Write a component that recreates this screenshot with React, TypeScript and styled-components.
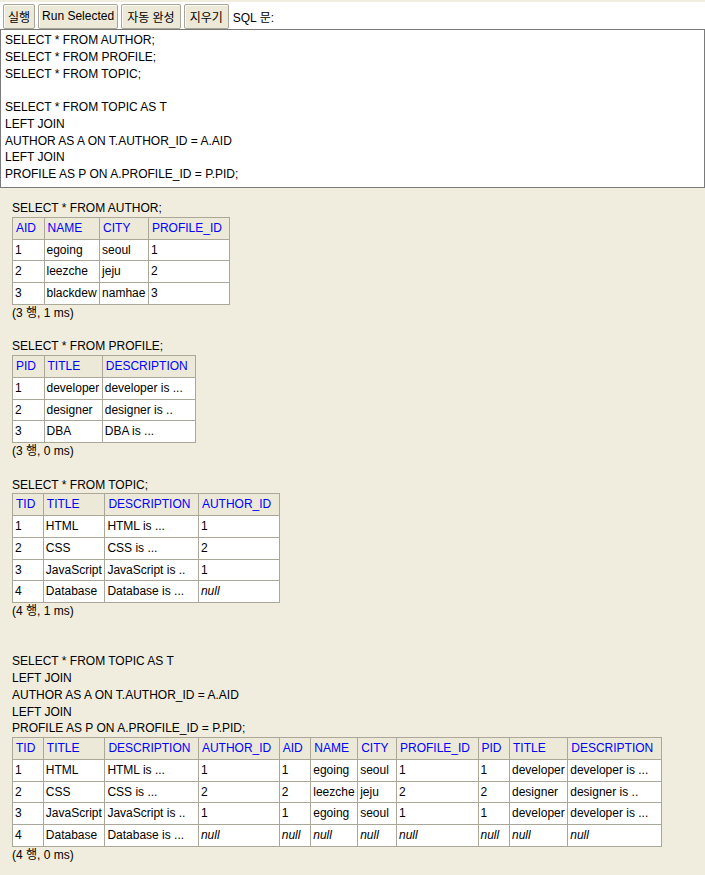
import React from "react";
import styled, { createGlobalStyle } from "styled-components";

const GlobalStyle = createGlobalStyle`
  html, body {
    margin: 0;
    padding: 0;
    background: #f0eddf;
  }
  body {
    font-family: "Liberation Sans", Arial, "Noto Sans CJK KR", sans-serif;
    font-size: 12px;
    color: #000;
  }
`;

const Toolbar = styled.div`
  display: flex;
  align-items: center;
  gap: 3px;
  height: 26px;
  padding: 1px 0 0 3px;
  border-top: 2px solid #f0eddf;
  background: #fff;
`;

const ToolButton = styled.button<{ $pad?: number }>`
  height: 25px;
  padding: 0 ${(p) => p.$pad ?? 4}px;
  margin: 0;
  font: 12px "Liberation Sans", Arial, "Noto Sans CJK KR", sans-serif;
  color: #000;
  background: #ece9d8;
  border: 1px solid #a9a699;
  border-radius: 2px;
  box-shadow: inset 1px 1px 0 #fbfaf5;
`;

const Label = styled.span`
  margin-left: 1px;
  font-size: 12px;
`;

const Editor = styled.textarea`
  display: block;
  box-sizing: border-box;
  width: 100%;
  height: 159px;
  margin: 0;
  padding: 2px 4px 0;
  border: 1px solid #7a7a7a;
  font: 12px/16.75px "Liberation Sans", Arial, "Noto Sans CJK KR", sans-serif;
  color: #000;
  background: #fff;
  resize: none;
  overflow: hidden;
`;

const Results = styled.div`
  padding: 12px 12px 20px;
  line-height: 16.75px;
`;

const Query = styled.div`
  white-space: pre;
`;

const Gap = styled.div<{ $lines: number }>`
  height: ${(p) => p.$lines * 16.75}px;
`;

const Table = styled.table`
  border-collapse: collapse;
  background: #fff;
`;

const Th = styled.th`
  border: 1px solid #aca899;
  background: #ece9d8;
  color: #0000ff;
  font-weight: normal;
  text-align: left;
  white-space: nowrap;
  padding: 2px 7.5px 2px 3px;
  line-height: 16.75px;
`;

const Td = styled.td<{ $null?: boolean }>`
  border: 1px solid #aca899;
  padding: 2px 2.5px 2px 2px;
  white-space: nowrap;
  line-height: 16.75px;
  font-style: ${(p) => (p.$null ? "italic" : "normal")};
`;

const Status = styled.div``;

type Cell = string | null;

interface Result {
  sql: string;
  cols: string[];
  rows: Cell[][];
  status: string;
  gapBefore: number;
}

const results: Result[] = [
  {
    sql: "SELECT * FROM AUTHOR;",
    cols: ["AID", "NAME", "CITY", "PROFILE_ID"],
    rows: [
      ["1", "egoing", "seoul", "1"],
      ["2", "leezche", "jeju", "2"],
      ["3", "blackdew", "namhae", "3"],
    ],
    status: "(3 행, 1 ms)",
    gapBefore: 0,
  },
  {
    sql: "SELECT * FROM PROFILE;",
    cols: ["PID", "TITLE", "DESCRIPTION"],
    rows: [
      ["1", "developer", "developer is ..."],
      ["2", "designer", "designer is .."],
      ["3", "DBA", "DBA is ..."],
    ],
    status: "(3 행, 0 ms)",
    gapBefore: 1,
  },
  {
    sql: "SELECT * FROM TOPIC;",
    cols: ["TID", "TITLE", "DESCRIPTION", "AUTHOR_ID"],
    rows: [
      ["1", "HTML", "HTML is ...", "1"],
      ["2", "CSS", "CSS is ...", "2"],
      ["3", "JavaScript", "JavaScript is ..", "1"],
      ["4", "Database", "Database is ...", null],
    ],
    status: "(4 행, 1 ms)",
    gapBefore: 1,
  },
  {
    sql: "SELECT * FROM TOPIC AS T\nLEFT JOIN\nAUTHOR AS A ON T.AUTHOR_ID = A.AID\nLEFT JOIN\nPROFILE AS P ON A.PROFILE_ID = P.PID;",
    cols: [
      "TID",
      "TITLE",
      "DESCRIPTION",
      "AUTHOR_ID",
      "AID",
      "NAME",
      "CITY",
      "PROFILE_ID",
      "PID",
      "TITLE",
      "DESCRIPTION",
    ],
    rows: [
      ["1", "HTML", "HTML is ...", "1", "1", "egoing", "seoul", "1", "1", "developer", "developer is ..."],
      ["2", "CSS", "CSS is ...", "2", "2", "leezche", "jeju", "2", "2", "designer", "designer is .."],
      ["3", "JavaScript", "JavaScript is ..", "1", "1", "egoing", "seoul", "1", "1", "developer", "developer is ..."],
      ["4", "Database", "Database is ...", null, null, null, null, null, null, null, null],
    ],
    status: "(4 행, 0 ms)",
    gapBefore: 2,
  },
];

const sqlText = `SELECT * FROM AUTHOR;
SELECT * FROM PROFILE;
SELECT * FROM TOPIC;

SELECT * FROM TOPIC AS T
LEFT JOIN
AUTHOR AS A ON T.AUTHOR_ID = A.AID
LEFT JOIN
PROFILE AS P ON A.PROFILE_ID = P.PID;`;

const ResultTable: React.FC<{ result: Result }> = ({ result }) => (
  <>
    {result.gapBefore > 0 && <Gap $lines={result.gapBefore} />}
    <Query>{result.sql}</Query>
    <Table>
      <thead>
        <tr>
          {result.cols.map((c, i) => (
            <Th key={i}>{c}</Th>
          ))}
        </tr>
      </thead>
      <tbody>
        {result.rows.map((row, r) => (
          <tr key={r}>
            {row.map((cell, i) => (
              <Td key={i} $null={cell === null}>
                {cell === null ? "null" : cell}
              </Td>
            ))}
          </tr>
        ))}
      </tbody>
    </Table>
    <Status>{result.status}</Status>
  </>
);

export default function App() {
  return (
    <>
      <GlobalStyle />
      <Toolbar>
        <ToolButton>실행</ToolButton>
        <ToolButton $pad={3}>Run Selected</ToolButton>
        <ToolButton $pad={5}>자동 완성</ToolButton>
        <ToolButton $pad={5}>지우기</ToolButton>
        <Label>SQL 문:</Label>
      </Toolbar>
      <Editor defaultValue={sqlText} spellCheck={false} />
      <Results>
        {results.map((r, i) => (
          <ResultTable key={i} result={r} />
        ))}
      </Results>
    </>
  );
}
